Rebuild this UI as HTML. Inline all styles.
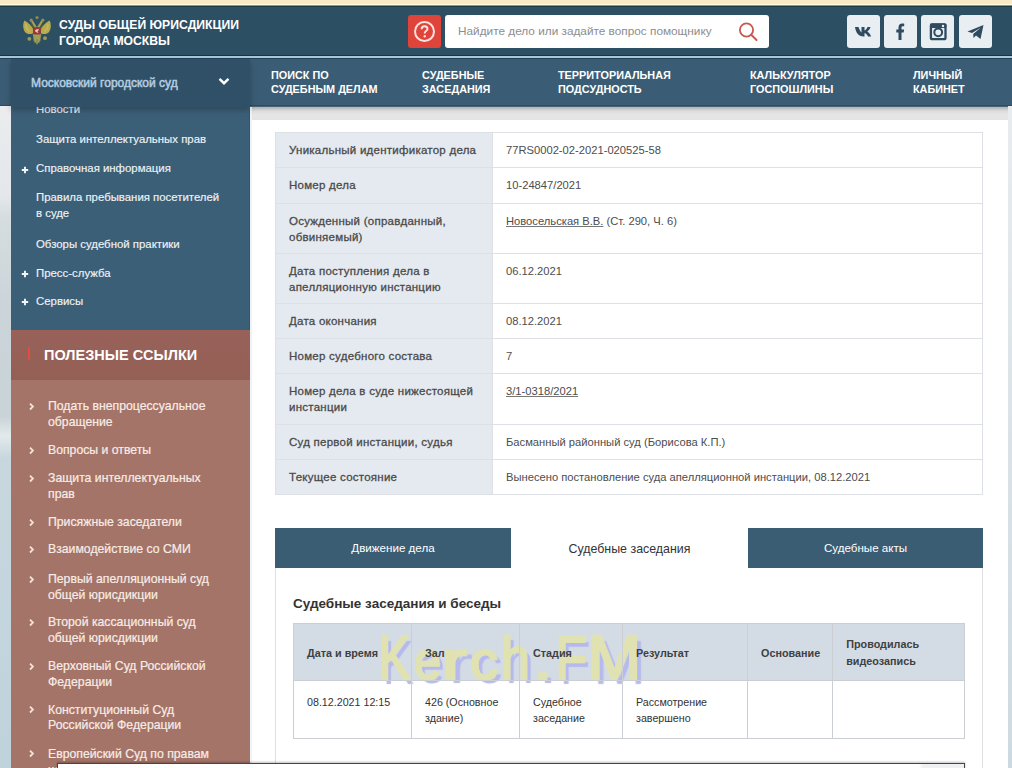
<!DOCTYPE html>
<html><head><meta charset="utf-8">
<style>
*{box-sizing:border-box;margin:0;padding:0}
html,body{width:1012px;height:768px;overflow:hidden;background:#fff}
body{position:relative;font-family:"Liberation Sans",sans-serif}
.abs{position:absolute}
#strip{left:0;top:0;width:1012px;height:6px;background:linear-gradient(180deg,#f8e9c4 0,#f8e9c4 3.5px,#fafde2 4px,#fafde2 4.8px,#8a9682 5.5px,#1f3a40 6px)}
#hdr{left:0;top:6px;width:1012px;height:50px;background:#2d4f64;border-top:1px solid #1f3a40}
#hline{left:0;top:55px;width:1012px;height:4px;background:linear-gradient(180deg,#1b3440 0,#1b3440 0.8px,#a9c6d7 1px,#a9c6d7 2.9px,#22405a 3.2px)}
#nav{left:0;top:59px;width:1012px;height:48px;background:linear-gradient(180deg,#3a5d75 0,#3a5c74 45.5px,#2e4a5c 46.5px,#2e4a5c 47px,#6d7e8a 48px)}
#bgL{left:0;top:106px;width:11px;height:662px;background:linear-gradient(180deg,#eaecee 0px,#e4e8ea 90px,#d6dde0 110px,#cbd5d9 200px,#c9d4d8 310px,#e2e9eb 330px,#c8d7de 352px,#bfd3dc 662px)}
#bgR{left:1008px;top:106px;width:4px;height:662px;background:linear-gradient(180deg,#e8ecef,#cdd9e0)}
#panel{left:250px;top:107px;width:758px;height:661px;background:#fff;border-left:2px solid #eef3f7}
#band{left:252px;top:107px;width:756px;height:13px;background:linear-gradient(180deg,#a9b3ba 0,#c6c6c8 2px,#dcdcdc 4px,#e5e5e5 7px,#e5e5e5 12.5px,#fafafa 13px)}
.title{color:#fff;font-weight:bold;font-size:12.2px;line-height:16px;left:59px;top:17px;letter-spacing:0px}
#help{left:408px;top:15px;width:33px;height:33px;background:#df443b;border-radius:3px}
#search{left:445px;top:15px;width:324px;height:33px;background:#fff;border-radius:3px}
#search span{position:absolute;left:13px;top:9px;font-size:11.8px;color:#8d8d8d;white-space:nowrap}
.soc{top:15px;width:33px;height:33px;background:#e8eef2;border-radius:3px}
.nav{color:#fff;font-weight:bold;font-size:10.85px;line-height:14px;top:68px;white-space:nowrap}
#side{left:11px;top:59px;width:239px;height:709px;background:#3c5f78}
#sidehd{left:11px;top:59px;width:239px;height:48px;background:#2f5067;box-shadow:0 3px 6px rgba(0,0,0,.25)}
#sidehd span{position:absolute;left:20px;top:17px;color:#b4cde0;font-size:12px;-webkit-text-stroke:0.5px #b4cde0;white-space:nowrap}
.mi{color:#eef3f6;font-size:11.4px;line-height:17.5px;left:36px;white-space:nowrap;-webkit-text-stroke:0.15px #eef3f6}
.plus{color:#fff;font-size:13px;font-weight:bold;left:20px}
#redhd{left:11px;top:330px;width:239px;height:50px;background:linear-gradient(180deg,#98625a 0,#945f55 100%)}
#redhd span{position:absolute;left:33px;top:17px;color:#fff;font-weight:bold;font-size:14.5px;white-space:nowrap}
#redbar{left:28px;top:347px;width:2px;height:13px;background:#e64c3c}
#redlist{left:11px;top:380px;width:239px;height:388px;background:#a47469}
.li{color:#f8ece6;font-size:12.25px;line-height:15.5px;left:48px;white-space:nowrap;-webkit-text-stroke:0.2px #f8ece6}
.chev{left:29px;width:5px;height:5px;border-right:1.5px solid #f3e4dc;border-bottom:1.5px solid #f3e4dc;transform:rotate(-45deg)}
table{border-collapse:collapse}
#t1{left:275px;top:132px;width:708px}
#t1 td{border:1px solid #dde1e6;font-size:11.2px;color:#4d4d4d;line-height:16px;vertical-align:top;padding:9px 12px 8px 13px}
#t1 td.l{background:#e5eaf1;font-size:11.5px;letter-spacing:0.25px;color:#4a4a4a;-webkit-text-stroke:0.3px #4a4a4a;width:217px;padding-left:13px}
#t1 td.v{background:#fff}
#t1 a{color:#4d4d4d;text-decoration:underline;text-decoration-color:#777}
#sect{left:275px;top:528px;width:708px;height:260px;border:1px solid #e0e0e0;border-top:1px solid #dcdcdc}
.tab{top:528px;height:40px;font-size:11.6px;text-align:center;line-height:40px;color:#fff;background:#3b5d74}
#h2{left:293px;top:596px;font-size:13.5px;font-weight:bold;color:#333;white-space:nowrap}
#t2{left:293px;top:623px;width:672px}
#t2 td{border:1px solid #cbcfd3;font-size:10.7px;color:#333;line-height:16px;vertical-align:top;padding:13px 12px 12px 13px}
#t2 tr.h td{background:transparent;font-weight:bold;font-size:10.8px;line-height:17px;height:57px;vertical-align:middle;padding:2px 12px 0 13px;color:#404040}
#t2 tr.r td{height:58px;padding-top:13px}
#wm{left:0;top:0;width:1012px;height:768px;filter:blur(0.5px)}
.wl{position:absolute;top:618px;font-size:61px;line-height:80px;font-weight:normal;color:#e0e3b1;-webkit-text-stroke:2.6px #e0e3b1;text-shadow:5px 4.5px 1.2px #b6b9ec}
#popup{left:56.5px;top:763px;width:908px;height:20px;background:linear-gradient(90deg,#fff 0,#fff 95%,#eef0f2 95.5%);border:1.6px solid #454545;box-shadow:0 -1px 2px rgba(0,0,0,.25)}
</style></head><body>
<div id="strip" class="abs"></div>
<div id="hdr" class="abs"></div>
<div id="hline" class="abs"></div>
<div id="nav" class="abs"></div>
<div id="bgL" class="abs"></div>
<div id="bgR" class="abs"></div>
<div id="panel" class="abs"></div>
<div id="band" class="abs"></div>

<!-- header -->
<svg class="abs" style="left:20px;top:12px" width="34" height="36" viewBox="0 0 34 36">
 <defs><filter id="bl" x="-20%" y="-20%" width="140%" height="140%"><feGaussianBlur stdDeviation="0.45"/></filter></defs>
 <g filter="url(#bl)">
 <path d="M10.5 9 L17 16 L23.5 9 L21 20 L13 20 Z" fill="#4a5a45"/>
 <path d="M4.5 8.5 C2.6 11.5 2.8 17 5 20 C7 22.3 10.5 22.6 13.2 21.2 L12.8 16.5 C11 13.5 8.5 10.5 4.5 8.5 Z" fill="#b9ab4c"/>
 <path d="M29.5 8.5 C31.4 11.5 31.2 17 29 20 C27 22.3 23.5 22.6 20.8 21.2 L21.2 16.5 C23 13.5 25.5 10.5 29.5 8.5 Z" fill="#b9ab4c"/>
 <path d="M6 12 C6 15 7 18 9.5 19.5 M28 12 C28 15 27 18 24.5 19.5" stroke="#cfc070" stroke-width="1.6" fill="none" opacity=".6"/>
 <path d="M11.8 8.8 C13.2 11.2 14.6 13.6 16 15.6 M22.2 8.8 C20.8 11.2 19.4 13.6 18 15.6" stroke="#a3a159" stroke-width="2.1" fill="none"/>
 <circle cx="11.2" cy="8.2" r="1.6" fill="#8f8e52"/><circle cx="22.8" cy="8.2" r="1.6" fill="#8f8e52"/>
 <circle cx="17" cy="5.6" r="1.6" fill="#8a8a4e"/>
 <path d="M12.8 22 L21.2 22 L20.2 28.5 L17 32.5 L13.8 28.5 Z" fill="#a09e58"/>
 <circle cx="9.3" cy="26.8" r="1.9" fill="#9c9b55"/>
 <circle cx="25" cy="26.2" r="1.9" fill="#9c9b55"/>
 <path d="M13.5 27.5 L15 31 M20.5 27.5 L19 31 M17 27 L17 32.5" stroke="#78804a" stroke-width="0.9" fill="none"/>
 <rect x="13.3" y="15.3" width="7.4" height="7.3" rx="1.2" fill="#9c3535"/>
 <path d="M14.8 18.8 C16 17.3 17.5 17 19.3 17.6 L17.6 19.2 L18.5 21 C17.2 20.6 15.8 20.2 14.8 18.8 Z" fill="#e3c9c9"/>
 </g>
</svg>
<div class="abs title">СУДЫ ОБЩЕЙ ЮРИСДИКЦИИ<br>ГОРОДА МОСКВЫ</div>
<div id="help" class="abs"><svg width="33" height="33" viewBox="0 0 33 33"><circle cx="16.5" cy="16.5" r="9.5" fill="none" stroke="#fbe3e0" stroke-width="2"/><path d="M13.6 14.2 C13.6 12.4 15 11.3 16.6 11.3 C18.3 11.3 19.5 12.4 19.5 13.9 C19.5 15.6 17.4 15.9 16.8 17.6 L16.8 18.6" fill="none" stroke="#fbe3e0" stroke-width="1.9"/><circle cx="16.8" cy="21.2" r="1.2" fill="#fbe3e0"/></svg></div>
<div id="search" class="abs"><span>Найдите дело или задайте вопрос помощнику</span>
 <svg style="position:absolute;left:292px;top:6px" width="22" height="22" viewBox="0 0 22 22"><circle cx="9.5" cy="9" r="6.6" fill="none" stroke="#c8574f" stroke-width="1.8"/><path d="M14.2 13.8 L19.5 19" stroke="#c8574f" stroke-width="2" stroke-linecap="round"/></svg>
</div>
<div class="abs soc" style="left:847px"><svg width="33" height="33" viewBox="0 0 33 33"><path d="M8 12 L11.5 12 C12.5 15 13.5 16.5 14.5 17.5 L14.5 12 L17.5 12 L17.5 15.5 C18.8 15.2 19.8 13.5 20.5 12 L23.5 12 C23 14 21.5 15.8 20.3 16.6 C21.5 17.2 23.2 19 24.2 21.5 L21 21.5 C20.2 19.8 19 18.3 17.5 18 L17.5 21.5 L16.5 21.5 C11.5 21.5 8.8 17.5 8 12 Z" fill="#2e4b5f"/></svg></div>
<div class="abs soc" style="left:884px"><svg width="33" height="33" viewBox="0 0 33 33"><path d="M14.5 25 L14.5 17.5 L12.3 17.5 L12.3 14.6 L14.5 14.6 L14.5 12.4 C14.5 10 15.9 8.6 18.2 8.6 C19.1 8.6 19.9 8.7 20.2 8.8 L20.2 11.3 L18.8 11.3 C17.7 11.3 17.5 11.9 17.5 12.7 L17.5 14.6 L20.1 14.6 L19.7 17.5 L17.5 17.5 L17.5 25 Z" fill="#2e4b5f"/></svg></div>
<div class="abs soc" style="left:921px"><svg width="33" height="33" viewBox="0 0 33 33"><rect x="9.9" y="9.4" width="14.6" height="14.8" rx="1.5" fill="none" stroke="#2e4b5f" stroke-width="2.3"/><rect x="9" y="8.5" width="16.4" height="4.5" rx="1" fill="#2e4b5f"/><circle cx="17.2" cy="17.3" r="3.9" fill="#e8eef2" stroke="#2e4b5f" stroke-width="2"/><circle cx="22" cy="11" r="1.2" fill="#e8eef2"/></svg></div>
<div class="abs soc" style="left:959px"><svg width="33" height="33" viewBox="0 0 33 33"><path d="M8.5 16.5 L24.5 10 L21.5 24 L17 20.5 L14.5 23 L14.2 19 L22 12.5 L13 18 Z" fill="#2e4b5f"/></svg></div>

<!-- nav -->
<div class="abs nav" style="left:271px">ПОИСК ПО<br>СУДЕБНЫМ ДЕЛАМ</div>
<div class="abs nav" style="left:422px">СУДЕБНЫЕ<br>ЗАСЕДАНИЯ</div>
<div class="abs nav" style="left:558px">ТЕРРИТОРИАЛЬНАЯ<br>ПОДСУДНОСТЬ</div>
<div class="abs nav" style="left:750px">КАЛЬКУЛЯТОР<br>ГОСПОШЛИНЫ</div>
<div class="abs nav" style="left:913px">ЛИЧНЫЙ<br>КАБИНЕТ</div>

<!-- side -->
<div id="side" class="abs"></div>
<div class="abs mi" style="top:100.5px">Новости</div>
<div id="sidehd" class="abs"><span>Московский городской суд</span>
 <svg style="position:absolute;left:207px;top:18px" width="12" height="9" viewBox="0 0 12 9"><path d="M1.5 1.8 L6 6.2 L10.5 1.8" fill="none" stroke="#fff" stroke-width="2.4"/></svg></div>
<div class="abs mi" style="top:131px">Защита интеллектуальных прав</div>
<svg class="abs" style="left:21px;top:165.6px" width="8" height="8" viewBox="0 0 8 8"><path d="M0.8 4 H7.2 M4 0.8 V7.2" stroke="#f4f7f9" stroke-width="1.9"/></svg><div class="abs mi" style="top:160px">Справочная информация</div>
<div class="abs mi" style="top:188.5px;line-height:16.7px">Правила пребывания посетителей<br>в суде</div>
<div class="abs mi" style="top:236px">Обзоры судебной практики</div>
<svg class="abs" style="left:21px;top:269.6px" width="8" height="8" viewBox="0 0 8 8"><path d="M0.8 4 H7.2 M4 0.8 V7.2" stroke="#f4f7f9" stroke-width="1.9"/></svg><div class="abs mi" style="top:265px">Пресс-служба</div>
<svg class="abs" style="left:21px;top:297.6px" width="8" height="8" viewBox="0 0 8 8"><path d="M0.8 4 H7.2 M4 0.8 V7.2" stroke="#f4f7f9" stroke-width="1.9"/></svg><div class="abs mi" style="top:293px">Сервисы</div>

<div class="abs" style="left:248.5px;top:107px;width:1.5px;height:223px;background:#33536a"></div>
<div id="redhd" class="abs"><span>ПОЛЕЗНЫЕ ССЫЛКИ</span></div>
<div id="redbar" class="abs"></div>
<div id="redlist" class="abs"></div>
<div class="abs li" style="top:399px">Подать внепроцессуальное<br>обращение</div>
<div class="abs li" style="top:443px">Вопросы и ответы</div>
<div class="abs li" style="top:471px">Защита интеллектуальных<br>прав</div>
<div class="abs li" style="top:515px">Присяжные заседатели</div>
<div class="abs li" style="top:542px">Взаимодействие со СМИ</div>
<div class="abs li" style="top:572px">Первый апелляционный суд<br>общей юрисдикции</div>
<div class="abs li" style="top:615px">Второй кассационный суд<br>общей юрисдикции</div>
<div class="abs li" style="top:659px">Верховный Суд Российской<br>Федерации</div>
<div class="abs li" style="top:702.5px">Конституционный Суд<br>Российской Федерации</div>
<div class="abs li" style="top:747px">Европейский Суд по правам<br>человека</div>
<svg class="abs" style="left:28px;top:403px" width="8" height="10" viewBox="0 0 8 10"><path d="M2 0.7 L4.9 3.6 L2 6.5" fill="none" stroke="#f5e2da" stroke-width="1.8"/></svg>
<svg class="abs" style="left:28px;top:447px" width="8" height="10" viewBox="0 0 8 10"><path d="M2 0.7 L4.9 3.6 L2 6.5" fill="none" stroke="#f5e2da" stroke-width="1.8"/></svg>
<svg class="abs" style="left:28px;top:475px" width="8" height="10" viewBox="0 0 8 10"><path d="M2 0.7 L4.9 3.6 L2 6.5" fill="none" stroke="#f5e2da" stroke-width="1.8"/></svg>
<svg class="abs" style="left:28px;top:519px" width="8" height="10" viewBox="0 0 8 10"><path d="M2 0.7 L4.9 3.6 L2 6.5" fill="none" stroke="#f5e2da" stroke-width="1.8"/></svg>
<svg class="abs" style="left:28px;top:546px" width="8" height="10" viewBox="0 0 8 10"><path d="M2 0.7 L4.9 3.6 L2 6.5" fill="none" stroke="#f5e2da" stroke-width="1.8"/></svg>
<svg class="abs" style="left:28px;top:576px" width="8" height="10" viewBox="0 0 8 10"><path d="M2 0.7 L4.9 3.6 L2 6.5" fill="none" stroke="#f5e2da" stroke-width="1.8"/></svg>
<svg class="abs" style="left:28px;top:619px" width="8" height="10" viewBox="0 0 8 10"><path d="M2 0.7 L4.9 3.6 L2 6.5" fill="none" stroke="#f5e2da" stroke-width="1.8"/></svg>
<svg class="abs" style="left:28px;top:663px" width="8" height="10" viewBox="0 0 8 10"><path d="M2 0.7 L4.9 3.6 L2 6.5" fill="none" stroke="#f5e2da" stroke-width="1.8"/></svg>
<svg class="abs" style="left:28px;top:706px" width="8" height="10" viewBox="0 0 8 10"><path d="M2 0.7 L4.9 3.6 L2 6.5" fill="none" stroke="#f5e2da" stroke-width="1.8"/></svg>
<svg class="abs" style="left:28px;top:750px" width="8" height="10" viewBox="0 0 8 10"><path d="M2 0.7 L4.9 3.6 L2 6.5" fill="none" stroke="#f5e2da" stroke-width="1.8"/></svg>

<!-- table 1 -->
<table id="t1" class="abs">
<tr><td class="l" style="height:35px">Уникальный идентификатор дела</td><td class="v">77RS0002-02-2021-020525-58</td></tr>
<tr><td class="l" style="height:36px">Номер дела</td><td class="v">10-24847/2021</td></tr>
<tr><td class="l" style="height:50px">Осужденный (оправданный,<br>обвиняемый)</td><td class="v"><a>Новосельская В.В.</a> (Ст. 290, Ч. 6)</td></tr>
<tr><td class="l" style="height:50px">Дата поступления дела в<br>апелляционную инстанцию</td><td class="v">06.12.2021</td></tr>
<tr><td class="l" style="height:35px">Дата окончания</td><td class="v">08.12.2021</td></tr>
<tr><td class="l" style="height:35px">Номер судебного состава</td><td class="v">7</td></tr>
<tr><td class="l" style="height:51px">Номер дела в суде нижестоящей<br>инстанции</td><td class="v"><a>3/1-0318/2021</a></td></tr>
<tr><td class="l" style="height:35px">Суд первой инстанции, судья</td><td class="v">Басманный районный суд (Борисова К.П.)</td></tr>
<tr><td class="l" style="height:35px">Текущее состояние</td><td class="v">Вынесено постановление суда апелляционной инстанции, 08.12.2021</td></tr>
</table>

<!-- section -->
<div id="sect" class="abs"></div>
<div class="abs tab" style="left:275px;width:236px">Движение дела</div>
<div class="abs tab" style="left:511px;width:237px;background:#fff;color:#333;font-size:12.4px;line-height:42px">Судебные заседания</div>
<div class="abs tab" style="left:748px;width:235px">Судебные акты</div>
<div id="h2" class="abs">Судебные заседания и беседы</div>
<div class="abs" style="left:294px;top:624px;width:670px;height:56px;background:#d3dce5"></div>
<div id="wm" class="abs"><span class="wl" style="left:377.7px;transform-origin:4px 62px;transform:scale(0.771,1.023)">K</span><span class="wl" style="left:413.5px;transform-origin:1px 62px;transform:scale(0.787,0.874)">e</span><span class="wl" style="left:443.2px;transform-origin:3px 62px;transform:scale(1.211,0.874)">r</span><span class="wl" style="left:470.0px;transform-origin:1px 62px;transform:scale(0.917,0.874)">c</span><span class="wl" style="left:500.8px;transform-origin:3px 62px;transform:scale(0.829,0.980)">h</span><span class="wl" style="left:534.0px;transform-origin:4px 62px;transform:scale(1.067,0.833)">.</span><span class="wl" style="left:554.5px;transform-origin:4px 62px;transform:scale(0.828,1.016)">F</span><span class="wl" style="left:588.0px;transform-origin:4px 62px;transform:scale(1.047,1.023)">M</span></div>
<table id="t2" class="abs">
<tr class="h"><td style="width:118px">Дата и время</td><td style="width:108px">Зал</td><td style="width:103px">Стадия</td><td style="width:125px">Результат</td><td style="width:84px">Основание</td><td>Проводилась<br>видеозапись</td></tr>
<tr class="r"><td>08.12.2021 12:15</td><td>426 (Основное<br>здание)</td><td>Судебное<br>заседание</td><td>Рассмотрение<br>завершено</td><td></td><td></td></tr>
</table>

<div id="popup" class="abs"></div>
</body></html>
